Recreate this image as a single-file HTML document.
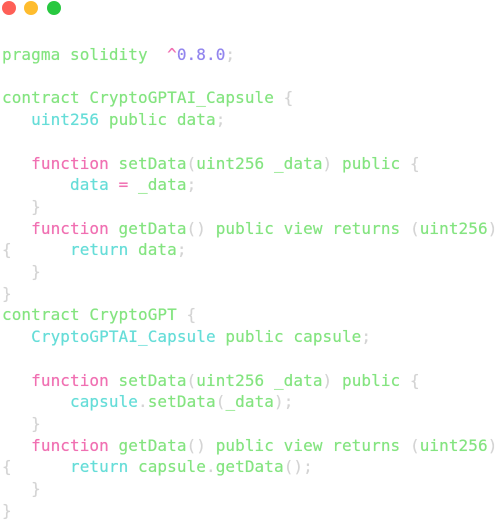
<!DOCTYPE html><html><head><style>
body{margin:0;width:500px;height:519px;background:#fff;overflow:hidden;position:relative}
.d{position:absolute;top:1px;width:14px;height:14px;border-radius:50%}
pre{position:absolute;left:2px;top:44px;margin:0;font-family:"DejaVu Sans Mono","Liberation Mono",monospace;font-size:16px;line-height:21.7px;color:#84e480;letter-spacing:0.08px;text-shadow:0 0 0.5px currentColor}
.k{color:#f070b2}.c{color:#66ddd8}.p{color:#9285ee}.g{color:#d4d4d4}
</style></head><body>
<div class="d" style="left:2px;background:#fe5f57"></div>
<div class="d" style="left:24px;background:#febc2e"></div>
<div class="d" style="left:47px;background:#28c840"></div>
<pre>pragma solidity  <span class="k">^</span><span class="p">0.8.0</span><span class="g">;</span>

contract CryptoGPTAI_Capsule <span class="g">{</span>
   <span class="c">uint256</span> public data<span class="g">;</span>

   <span class="k">function</span> setData<span class="g">(</span>uint256 _data<span class="g">)</span> public <span class="g">{</span>
       <span class="c">data</span> <span class="k">=</span> _data<span class="g">;</span>
   <span class="g">}</span>
   <span class="k">function</span> getData<span class="g">()</span> public view returns <span class="g">(</span>uint256<span class="g">)</span>
<span class="g">{</span>      <span class="c">return</span> data<span class="g">;</span>
   <span class="g">}</span>
<span class="g">}</span>
contract CryptoGPT <span class="g">{</span>
   <span class="c">CryptoGPTAI_Capsule</span> public capsule<span class="g">;</span>

   <span class="k">function</span> setData<span class="g">(</span>uint256 _data<span class="g">)</span> public <span class="g">{</span>
       <span class="c">capsule</span><span class="g">.</span>setData<span class="g">(</span>_data<span class="g">);</span>
   <span class="g">}</span>
   <span class="k">function</span> getData<span class="g">()</span> public view returns <span class="g">(</span>uint256<span class="g">)</span>
<span class="g">{</span>      <span class="c">return</span> capsule<span class="g">.</span>getData<span class="g">();</span>
   <span class="g">}</span>
<span class="g">}</span></pre>
</body></html>
